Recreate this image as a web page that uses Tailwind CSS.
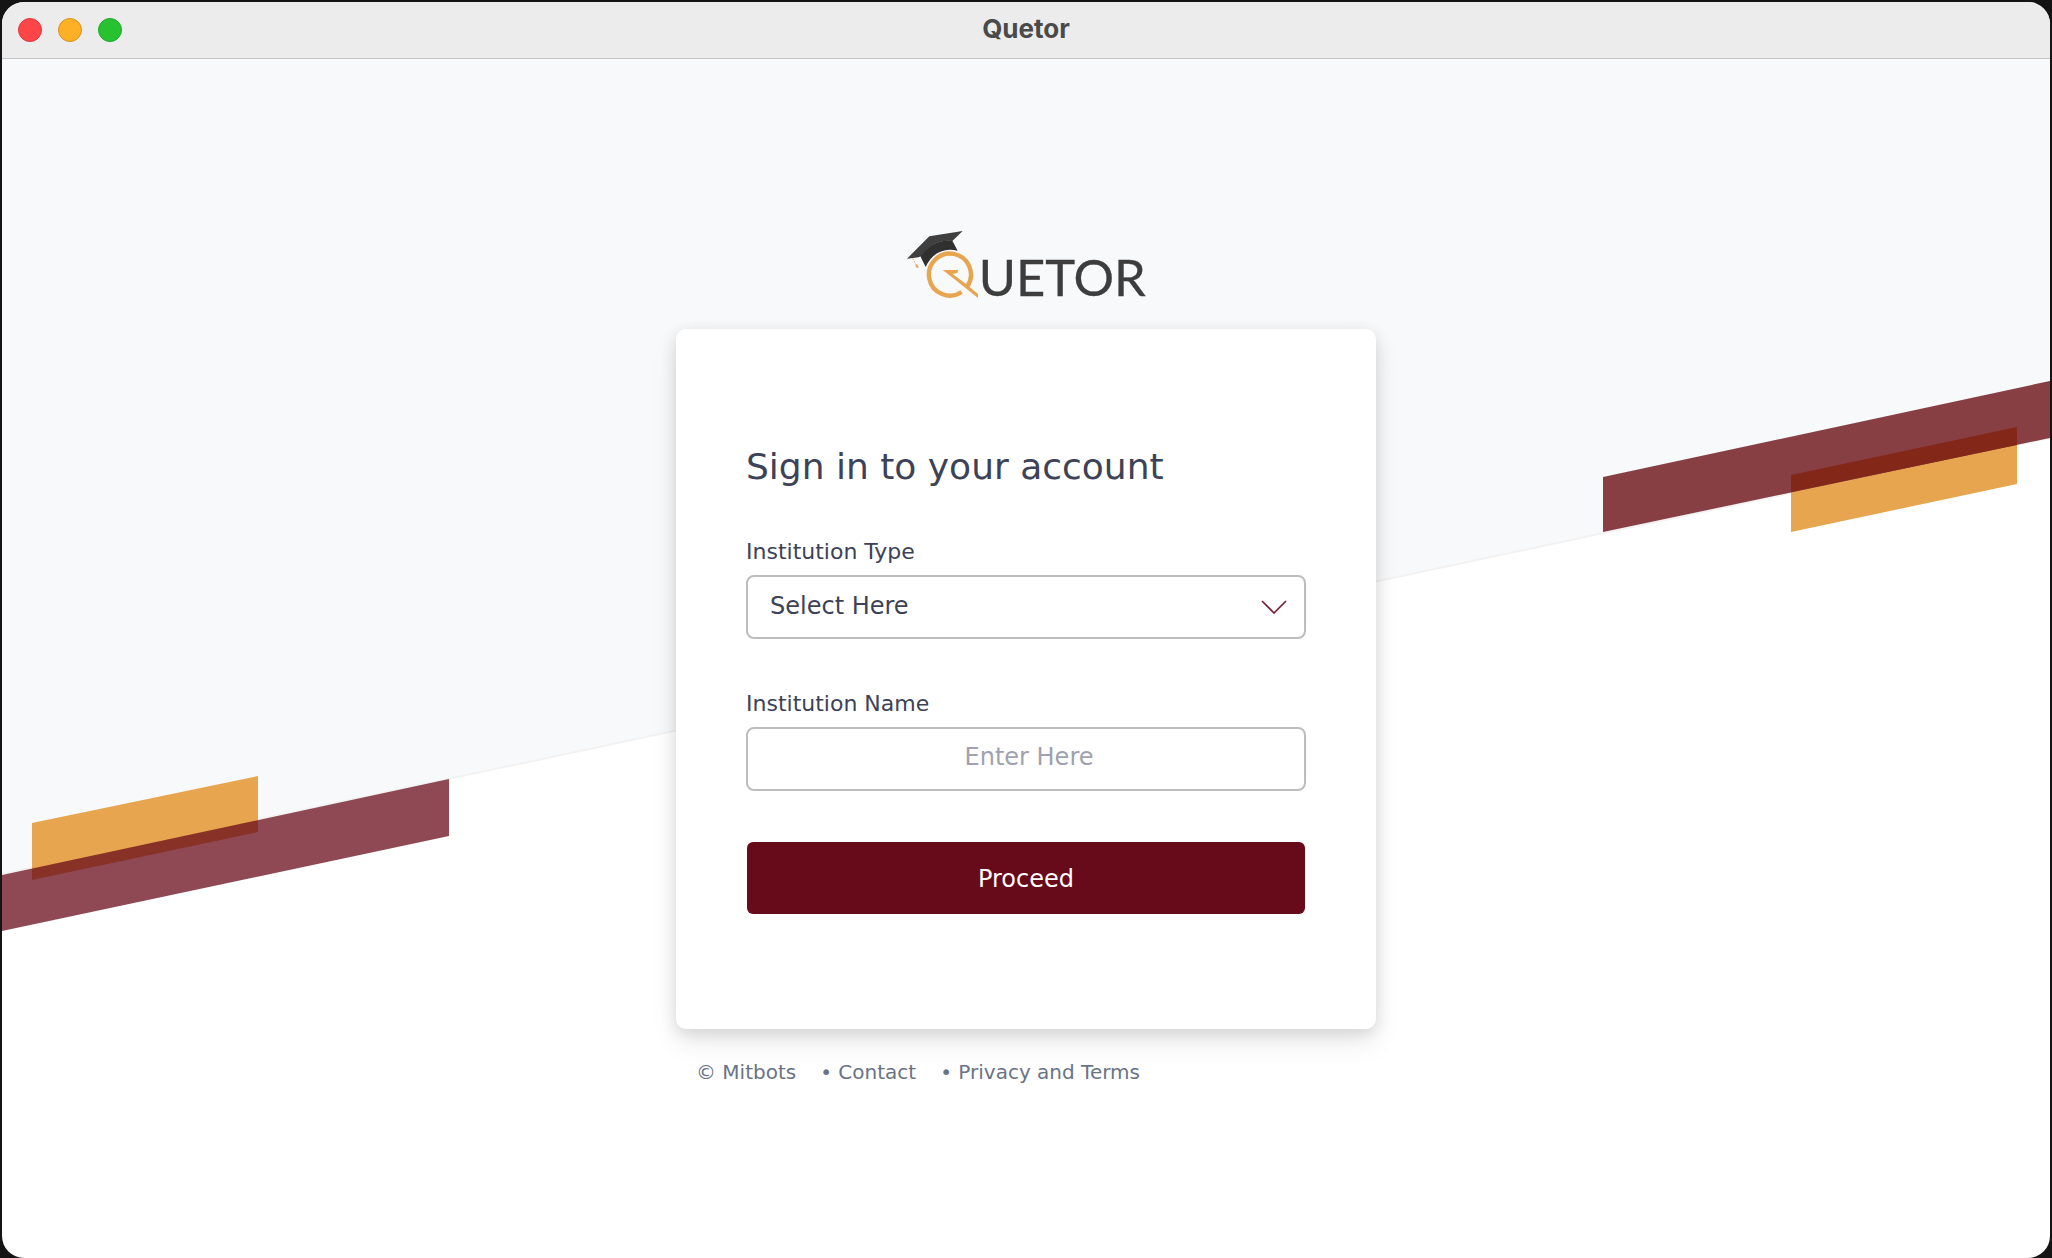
<!DOCTYPE html>
<html lang="en">

<head>
    <meta charset="UTF-8">
    <meta name="viewport" content="width=device-width, initial-scale=1.0">
    <title>Quetor</title>
    <script src="https://cdn.jsdelivr.net/npm/@tailwindcss/browser@4"></script>
</head>

<body class="flex min-h-screen flex-col bg-[#141414] px-0.5 pt-0.5 font-['DejaVu_Sans',Verdana,sans-serif] text-[#3c4257]">

    <div class="flex flex-1 flex-col overflow-hidden rounded-[22px] bg-white">

        <!-- Title bar -->
        <header class="grid h-[57px] grid-cols-3 items-center border-b border-[#c6c6c6] bg-[#ececec] px-4">
            <div class="flex gap-4">
                <button type="button" aria-label="Close" class="size-6 rounded-full border border-[#e0383c] bg-[#fe4649]"></button>
                <button type="button" aria-label="Minimize" class="size-6 rounded-full border border-[#d8921c] bg-[#fdb025]"></button>
                <button type="button" aria-label="Zoom" class="size-6 rounded-full border border-[#1fa82a] bg-[#28c231]"></button>
            </div>
            <h1 class="pb-0.5 text-center font-['Inter',sans-serif] text-[26px] leading-8 font-bold text-[#4a4a4a]">Quetor</h1>
        </header>

        <!-- Main Content -->
        <main class="relative flex flex-1 flex-col items-center pt-[168px]">

            <!-- Slanted background -->
            <svg class="absolute inset-0 h-full w-full" viewBox="0 0 2048 1199" preserveAspectRatio="none" aria-hidden="true">
                <polygon points="0,0 2048,0 2048,379 0,815" fill="#f7f9fb" />
                <line x1="0" y1="815" x2="2048" y2="379" stroke="#f3f2f2" stroke-width="2" />
                <polygon points="30,764 256,717 256,773 30,821" fill="#e8a54f" />
                <polygon points="0,816 447,720 447,777 0,872" fill="#650717" fill-opacity="0.734" />
                <polygon points="1789,416 2015,368 2015,425 1789,473" fill="#e8a54f" />
                <polygon points="1601,418 2048,322 2048,379 1601,473" fill="#883f44" />
                <polygon points="1789,416 2015,368 2015,386 1789,433" fill="#832818" />
            </svg>

            <!-- Logo -->
            <svg class="relative mb-[26px] h-[76px] w-[248px] overflow-visible" viewBox="36 36 744 228" role="img" aria-label="Quetor">
                <path d="M51 131 L118 64 L218 48 L187 78 C150 73 114 90 92 124 L86 127 Z" fill="#3f3f3f" />
                <path d="M91 124 C112 90 150 73 187 77 L203 107 C160 96 125 116 107 156 Z" fill="#303030" />
                <path d="M68 130 L77 147" stroke="#e8a54f" stroke-width="3" stroke-dasharray="5 4" />
                <path d="M75 148 L80 148 L87 157 L80 159 Z" fill="#e8a54f" />
                <path d="M215 231 A63 63 0 1 1 232 214" fill="none" stroke="#e8a54f" stroke-width="13" />
                <path d="M158 165 L204 165 L203 173 L188 177 L229 208 L264 237 L264 249 L190 190 Z" fill="#e8a54f" />
                <text x="266" y="242" font-family="Lato, sans-serif" font-size="152" fill="#3d3d3d" stroke="#3d3d3d" stroke-width="1">UETOR</text>
            </svg>

            <!-- Sign in card -->
            <div class="relative w-[700px]">
                <form class="flex h-[700px] flex-col rounded-[10px] bg-white px-[70px] pt-[116px] shadow-[0_14px_28px_rgba(0,0,0,0.08),0_4px_16px_rgba(0,0,0,0.12)]">
                    <h2 class="mb-[47px] text-4xl leading-[44px]">Sign in to your account</h2>

                    <div class="mb-[49px]">
                        <label for="institution-type" class="mb-[7px] block text-[22px] leading-8">Institution Type</label>
                        <div class="relative">
                            <select id="institution-type" class="block h-16 w-full appearance-none rounded-lg border-2 border-[#bdbdbd] bg-white px-[22px] pb-0.5 text-2xl">
                                <option>Select Here</option>
                            </select>
                            <svg class="pointer-events-none absolute top-[25px] right-[19px] h-[14px] w-[26px]" viewBox="0 0 26 14" fill="none" stroke="#7b1a30" stroke-width="1.6" aria-hidden="true">
                                <path d="M1 1 L13 13 L25 1" />
                            </svg>
                        </div>
                    </div>

                    <div class="mb-[51px]">
                        <label for="institution-name" class="mb-[7px] block text-[22px] leading-8">Institution Name</label>
                        <input type="text" id="institution-name" placeholder="Enter Here" class="block h-16 w-full rounded-lg border-2 border-[#bdbdbd] bg-white pb-1 pl-1.5 text-center text-2xl placeholder:text-[#a0a1ae]">
                    </div>

                    <button type="submit" class="mx-px h-[72px] rounded-md bg-[#670a19] pt-0.5 text-2xl text-white">Proceed</button>
                </form>

                <!-- Footer links -->
                <footer class="mt-[29px] flex gap-6 pl-5 text-xl leading-7 text-[#697386]">
                    <a href="#">© Mitbots</a>
                    <a href="#">• Contact</a>
                    <a href="#">• Privacy and Terms</a>
                </footer>
            </div>
        </main>
    </div>

</body>

</html>
